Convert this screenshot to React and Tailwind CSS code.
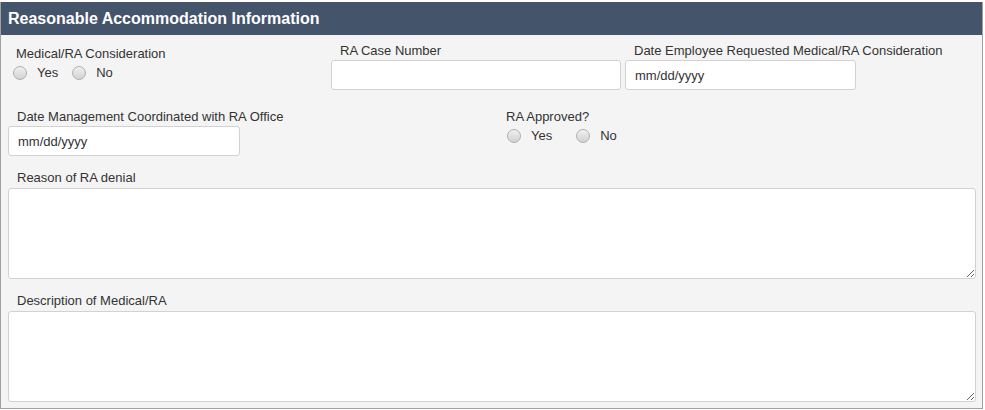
import React from 'react';

const font = { fontFamily: '"Liberation Sans", Arial, sans-serif' };

const Radio = ({ label, className = '' }) => (
  <label className={`flex items-center ${className}`}>
    <span className="inline-block h-[14px] w-[14px] rounded-full border border-[#b0b0b0] bg-gradient-to-b from-[#f0f0f0] to-[#d2d2d2]" />
    <span className="ml-[10px] text-[13px] text-[#333]">{label}</span>
  </label>
);

const Field = ({ label, width, placeholder }) => (
  <div className="flex flex-col">
    <span className="pl-[9px] text-[13px] leading-[16px] text-[#333]">{label}</span>
    <input
      type="text"
      placeholder={placeholder}
      className={`mt-[1px] h-[30px] ${width} rounded-[3px] border border-[#d2d2d2] bg-white px-[9px] text-[13px] text-[#333] outline-none placeholder:text-[#333]`}
    />
  </div>
);

const TextBox = ({ label, className = '' }) => (
  <div className={`flex flex-col ${className}`}>
    <span className="pl-[9px] text-[13px] leading-[16px] text-[#333]">{label}</span>
    <textarea className="mt-[2px] h-[91px] w-[968px] resize-y rounded-[3px] border border-[#d2d2d2] bg-white outline-none" />
  </div>
);

export default function App() {
  return (
    <div className="h-[410px] w-[985px] bg-white pt-[2px]" style={font}>
      <div className="w-[983px] border-x border-b border-[#a0a0a0] bg-[#f4f4f4] pb-[6px]">
        {/* section title */}
        <div className="flex h-[33px] items-center bg-[#44546b] pl-[7px] text-[16px] font-bold text-white">
          Reasonable Accommodation Information
        </div>

        <div className="pl-[7px]">
          {/* first row */}
          <div className="flex pt-[8px]">
            <div className="w-[323px] pt-[3px]">
              <span className="block pl-[8px] text-[13px] leading-[16px] text-[#333]">Medical/RA Consideration</span>
              <div className="mt-[1px] flex pl-[5px]">
                <Radio label="Yes" />
                <Radio label="No" className="ml-[14px]" />
              </div>
            </div>
            <div className="w-[295px]">
              <Field label="RA Case Number" width="w-[290px]" />
            </div>
            <div className="-ml-[1px]">
              <Field label="Date Employee Requested Medical/RA Consideration" width="w-[231px]" placeholder="mm/dd/yyyy" />
            </div>
          </div>

          {/* second row */}
          <div className="mt-[19px] flex">
            <div className="w-[498px]">
              <Field label="Date Management Coordinated with RA Office" width="w-[232px]" placeholder="mm/dd/yyyy" />
            </div>
            <div>
              <span className="block text-[13px] leading-[16px] text-[#333]">RA Approved?</span>
              <div className="mt-[1px] flex pl-[1px]">
                <Radio label="Yes" />
                <Radio label="No" className="ml-[24px]" />
              </div>
            </div>
          </div>

          <TextBox label="Reason of RA denial" className="mt-[14px]" />
          <TextBox label="Description of Medical/RA" className="mt-[14px]" />
        </div>
      </div>
    </div>
  );
}
